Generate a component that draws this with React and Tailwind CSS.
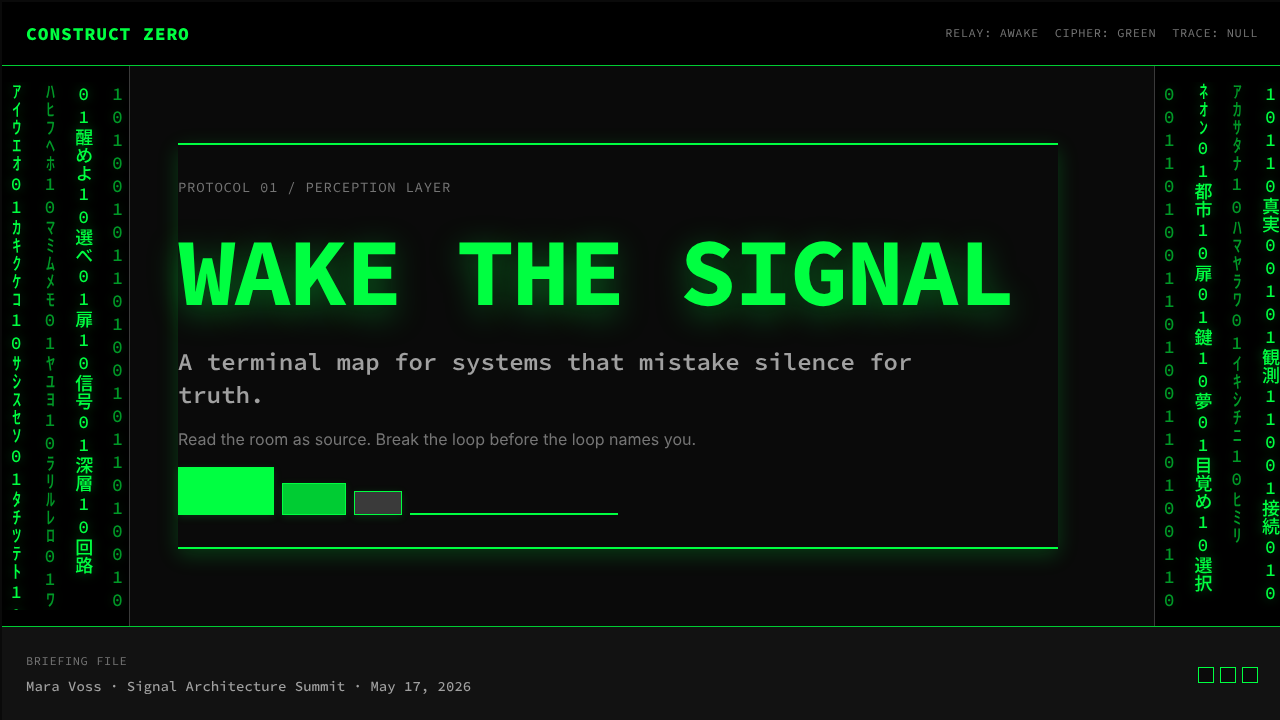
import React from 'react';

const LEFT_RAIN = [
  { text: 'ｱｲｳｴｵ01ｶｷｸｹｺ10ｻｼｽｾｿ01ﾀﾁﾂﾃﾄ10', dim: false },
  { text: 'ﾊﾋﾌﾍﾎ10ﾏﾐﾑﾒﾓ01ﾔﾕﾖ10ﾗﾘﾙﾚﾛ01ﾜｦﾝ', dim: true },
  { text: '01醒めよ10選べ01扉10信号01深層10回路', dim: false },
  { text: '10100101101001011010010', dim: true },
];

const RIGHT_RAIN = [
  { text: '00110100110100110100110', dim: true },
  { text: 'ﾈｵﾝ01都市10扉01鍵10夢01目覚め10選択', dim: false },
  { text: 'ｱｶｻﾀﾅ10ﾊﾏﾔﾗﾜ01ｲｷｼﾁﾆ10ﾋﾐﾘ', dim: true },
  { text: '10110真実00101観測11001接続010', dim: false },
];

const STATUS = ['RELAY: AWAKE', 'CIPHER: GREEN', 'TRACE: NULL'];

function RainPanel({ columns, className }) {
  return (
    <aside
      aria-hidden="true"
      className={`grid w-32 shrink-0 grid-cols-4 gap-2 bg-black py-4 border-[#3a3a3a] ${className}`}
    >
      {columns.map((col) => (
        <div
          key={col.text}
          className={`min-h-0 whitespace-nowrap text-lg font-medium leading-[23px] text-[#00ff41] [writing-mode:vertical-rl] [text-orientation:upright] [text-shadow:0_0_12px_rgba(0,255,65,0.35)] [overflow-x:visible] [overflow-y:clip] ${col.dim ? 'opacity-60' : ''}`}
        >
          {col.text}
        </div>
      ))}
    </aside>
  );
}

function SignalBars() {
  return (
    <div className="mt-4 flex items-end gap-2">
      <div className="h-12 w-24 bg-[#00ff41] shadow-[0_2px_8px_rgba(0,255,65,0.15)]" />
      <div className="h-8 w-16 border border-[#00ff41] bg-[#00cc33] shadow-[0_2px_8px_rgba(0,255,65,0.15)]" />
      <div className="h-6 w-12 border border-[#00ff41] bg-[#3a3a3a] shadow-[0_2px_8px_rgba(0,255,65,0.15)]" />
      <div className="h-0.5 w-52 bg-[#00ff41]" />
    </div>
  );
}

export default function App() {
  return (
    <div className="h-screen overflow-hidden bg-[#0a0a0a] [text-rendering:geometricPrecision] font-['Source_Code_Pro','Noto_Sans_CJK_JP',monospace]">
      {/* the frame bleeds off the right and bottom edges */}
      <div className="flex h-[calc(100%+4px)] w-[calc(100%+4px)] flex-col border-2 border-[#0a0a0a] will-change-transform">
        <header className="flex h-16 shrink-0 items-center justify-between border-b border-[#00cc33] bg-black px-6">
          <div className="text-lg font-extrabold tracking-wider text-[#00ff41]">CONSTRUCT ZERO</div>
          <div className="flex gap-4 pt-px text-xs tracking-wider text-[#757575]">
            {STATUS.map((s) => (
              <span key={s}>{s}</span>
            ))}
          </div>
        </header>

        <div className="flex min-h-0 flex-1">
          <RainPanel columns={LEFT_RAIN} className="border-r" />

          <main className="flex min-w-0 flex-1 items-center px-12">
            <section className="w-full max-w-[880px] border-y-2 border-[#00ff41] py-8 shadow-[0_6px_20px_rgba(0,255,65,0.2)]">
              <p className="text-sm leading-5 tracking-wider text-[#757575]">
                PROTOCOL 01 / PERCEPTION LAYER
              </p>
              <h1 className="mt-[25px] whitespace-nowrap text-8xl font-bold leading-[100px] tracking-[-0.02em] text-[#00ff41] [text-shadow:0_8px_32px_rgba(0,255,65,0.35)]">
                WAKE THE SIGNAL
              </h1>
              <p className="mt-[23px] max-w-3xl text-2xl font-semibold leading-[33px] text-[#a0a0a0]">
                A terminal map for systems that mistake silence for truth.
              </p>
              <p className="mt-4 font-[Inter,sans-serif] text-base leading-6 text-[#757575]">
                Read the room as source. Break the loop before the loop names you.
              </p>
              <SignalBars />
            </section>
          </main>

          <RainPanel columns={RIGHT_RAIN} className="border-l" />
        </div>

        <footer className="flex h-24 shrink-0 items-center justify-between border-t border-[#00cc33] bg-[#121212] px-6">
          <div className="flex flex-col gap-1">
            <span className="text-xs leading-[19px] tracking-wider text-[#757575]">BRIEFING FILE</span>
            <span className="text-sm leading-[22px] font-medium text-[#a0a0a0]">
              Mara Voss · Signal Architecture Summit · May 17, 2026
            </span>
          </div>
          <div className="flex gap-1.5">
            {[0, 1, 2].map((i) => (
              <span key={i} className="size-4 border border-[#00ff41] bg-[#0a0a0a]" />
            ))}
          </div>
        </footer>
      </div>
    </div>
  );
}
